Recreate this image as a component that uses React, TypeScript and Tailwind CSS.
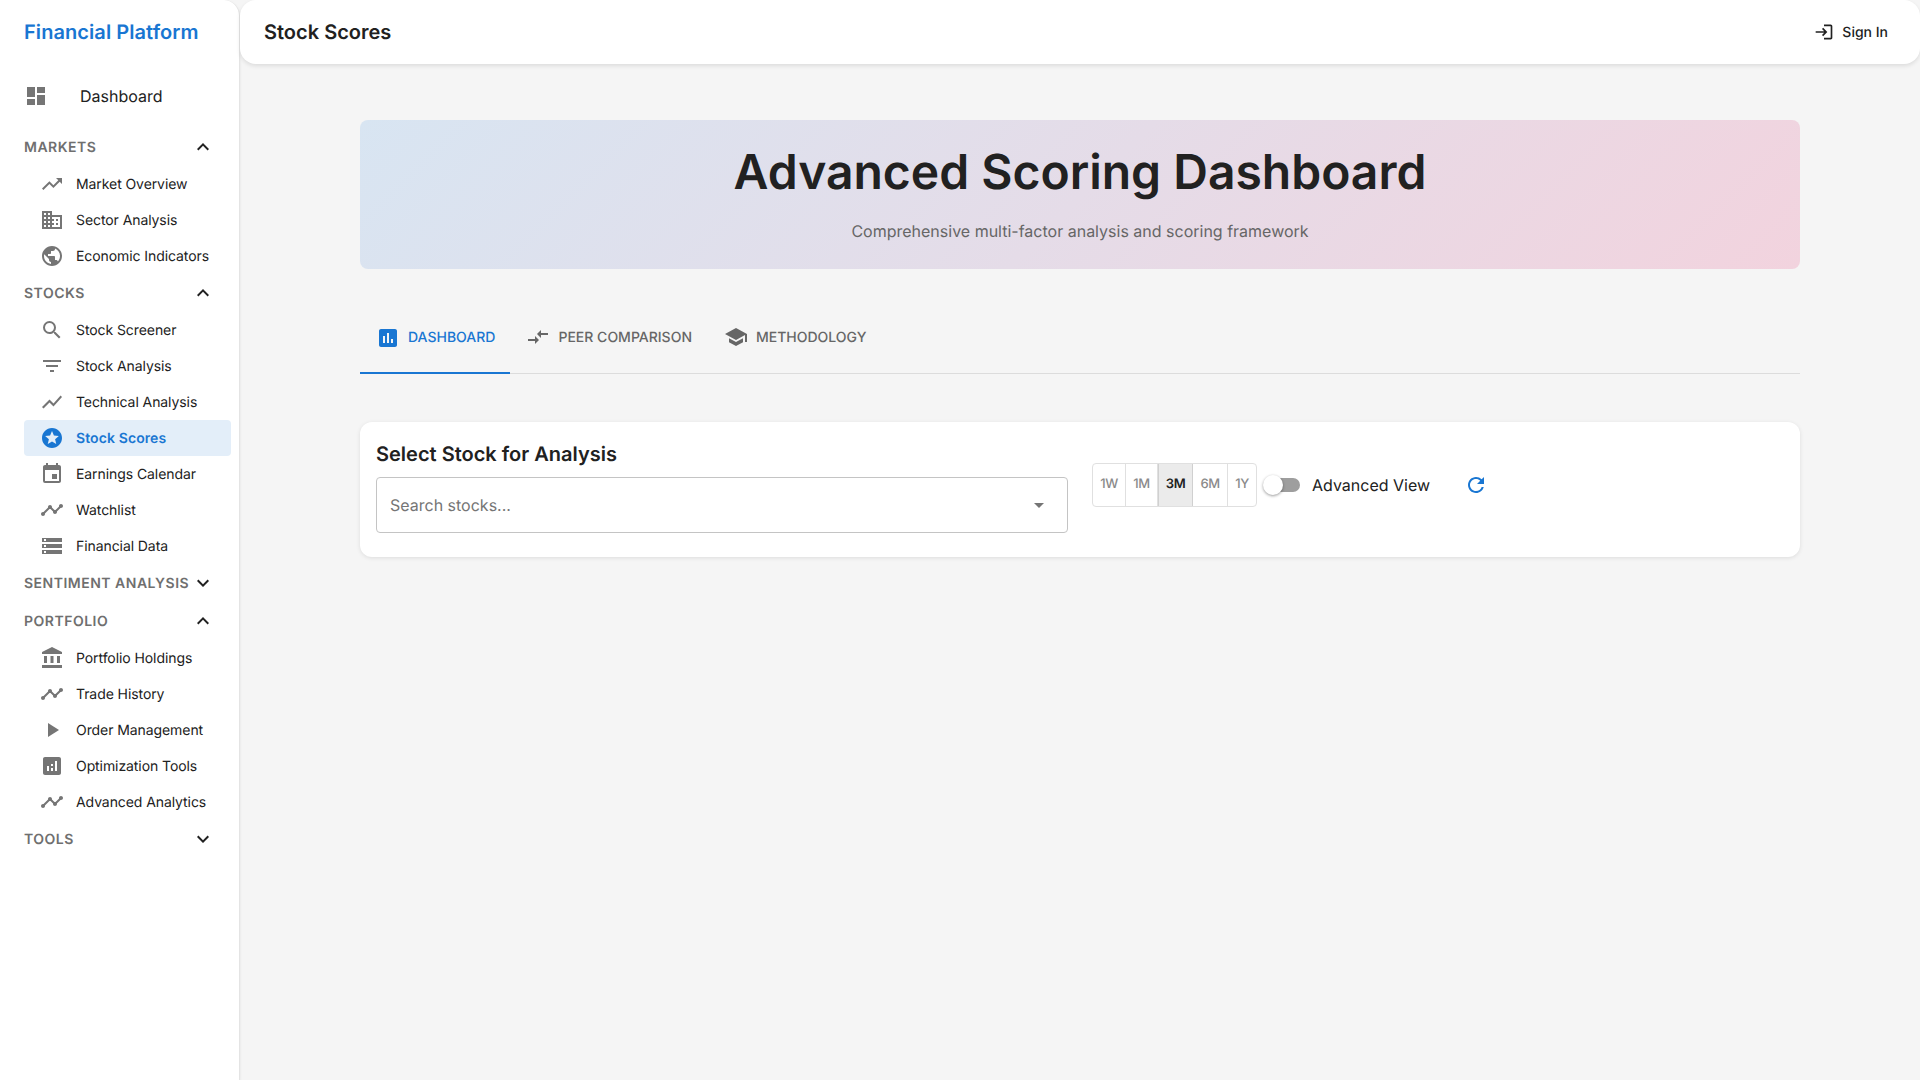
import React from 'react';
import type { IconType } from 'react-icons';
import {
  MdDashboard,
  MdTrendingUp,
  MdBusiness,
  MdPublic,
  MdExpandLess,
  MdExpandMore,
  MdSearch,
  MdFilterList,
  MdShowChart,
  MdStars,
  MdEvent,
  MdTimeline,
  MdStorage,
  MdAccountBalance,
  MdPlayArrow,
  MdAssessment,
  MdAnalytics,
  MdCompareArrows,
  MdSchool,
  MdRefresh,
  MdLogin,
  MdArrowDropDown,
} from 'react-icons/md';

type NavItem = { label: string; icon: IconType; active?: boolean };
type NavSection = { title: string; open: boolean; items: NavItem[] };

const sections: NavSection[] = [
  {
    title: 'Markets',
    open: true,
    items: [
      { label: 'Market Overview', icon: MdTrendingUp },
      { label: 'Sector Analysis', icon: MdBusiness },
      { label: 'Economic Indicators', icon: MdPublic },
    ],
  },
  {
    title: 'Stocks',
    open: true,
    items: [
      { label: 'Stock Screener', icon: MdSearch },
      { label: 'Stock Analysis', icon: MdFilterList },
      { label: 'Technical Analysis', icon: MdShowChart },
      { label: 'Stock Scores', icon: MdStars, active: true },
      { label: 'Earnings Calendar', icon: MdEvent },
      { label: 'Watchlist', icon: MdTimeline },
      { label: 'Financial Data', icon: MdStorage },
    ],
  },
  { title: 'Sentiment Analysis', open: false, items: [] },
  {
    title: 'Portfolio',
    open: true,
    items: [
      { label: 'Portfolio Holdings', icon: MdAccountBalance },
      { label: 'Trade History', icon: MdTimeline },
      { label: 'Order Management', icon: MdPlayArrow },
      { label: 'Optimization Tools', icon: MdAnalytics },
      { label: 'Advanced Analytics', icon: MdTimeline },
    ],
  },
  { title: 'Tools', open: false, items: [] },
];

const ranges = [
  { label: '1W', width: 'w-[33px]' },
  { label: '1M', width: 'w-[32px]' },
  { label: '3M', width: 'w-[35px]' },
  { label: '6M', width: 'w-[35px]' },
  { label: '1Y', width: 'w-[28px]' },
];

const Sidebar: React.FC = () => (
  <aside className="w-[240px] shrink-0 min-h-screen bg-white rounded-tr-2xl border-r border-[#e4e4e4] shadow-[0_1px_3px_rgba(0,0,0,0.08)]">
    <div className="h-[64px] flex items-center pl-6 text-[20px] font-semibold tracking-[0.07px] text-[#1976d2]">Financial Platform</div>
    <div className="h-[48px] mt-2 flex items-center pl-6">
      <MdDashboard className="w-6 h-6 text-[#757575]" />
      <span className="ml-[32px] text-[16px] text-[#212121]">Dashboard</span>
    </div>
    <nav className="mt-2 px-6">
      {sections.map((section) => (
        <div key={section.title}>
          <div className="h-[38px] w-[191px] flex items-center justify-between">
            <span className="text-[14px] font-semibold uppercase tracking-[0.5px] whitespace-nowrap text-[#6f6f6f]">{section.title}</span>
            {section.open ? (
              <MdExpandLess className="w-6 h-6 shrink-0 text-[#212121]" />
            ) : (
              <MdExpandMore className="w-6 h-6 shrink-0 text-[#212121]" />
            )}
          </div>
          {section.items.map((item) => (
            <div
              key={item.label}
              className={
                item.active
                  ? 'h-9 w-[207px] flex items-center pl-4 rounded bg-[#e3eef9] text-[#1976d2] font-semibold tracking-[0.1px]'
                  : 'h-9 w-[207px] flex items-center pl-4 text-[#212121] tracking-[-0.08px]'
              }
            >
              <item.icon className={item.active ? 'w-6 h-6 shrink-0 text-[#1976d2]' : 'w-6 h-6 shrink-0 text-[#757575]'} />
              <span className="ml-3 text-[14px]">{item.label}</span>
            </div>
          ))}
        </div>
      ))}
    </nav>
  </aside>
);

const Topbar: React.FC = () => (
  <header className="h-[64px] bg-white rounded-2xl shadow-[0_2px_4px_rgba(0,0,0,0.1)] flex items-center justify-between pl-6 pr-8">
    <h1 className="text-[20px] font-semibold text-[#212121]">Stock Scores</h1>
    <div className="flex items-center gap-2 text-[14px] font-medium text-[#212121]">
      <MdLogin className="w-5 h-5" />
      <span>Sign In</span>
    </div>
  </header>
);

const Tabs: React.FC = () => (
  <div className="mt-[32px] h-[73px] flex border-b border-[#dcdcdc] text-[14px] font-medium uppercase">
    <div className="h-[73px] pl-4 pr-[15px] pt-[2px] flex items-center gap-2 text-[#1976d2] border-b-2 border-[#1976d2]">
      <MdAssessment className="w-6 h-6" />
      <span>Dashboard</span>
    </div>
    <div className="h-[72px] px-4 flex items-center gap-2 text-[#666666]">
      <MdCompareArrows className="w-6 h-6" />
      <span>Peer Comparison</span>
    </div>
    <div className="h-[72px] px-4 flex items-center gap-2 text-[#666666]">
      <MdSchool className="w-6 h-6" />
      <span>Methodology</span>
    </div>
  </div>
);

const RangeToggle: React.FC = () => (
  <div className="flex h-[44px] rounded border border-[#e0e0e0] text-[13px] tracking-[-0.5px] font-medium">
    {ranges.map((r) => (
      <div
        key={r.label}
        className={
          r.label === '3M'
            ? `${r.width} flex items-center justify-center bg-[#ebebeb] text-[#212121] border-x border-[#d0d0d0] font-semibold`
            : `${r.width} flex items-center justify-center text-[#8a8a8a] not-last:border-r border-[#e0e0e0]`
        }
      >
        {r.label}
      </div>
    ))}
  </div>
);

const StockPicker: React.FC = () => (
  <section className="mt-[48px] h-[135px] bg-white rounded-xl shadow-[0_1px_4px_rgba(0,0,0,0.1)] px-4 flex gap-6">
    <div className="w-[692px] shrink-0 pt-5">
      <h2 className="text-[20px] leading-[24px] font-semibold text-[#212121]">Select Stock for Analysis</h2>
      <div className="mt-[11px] h-[56px] rounded border border-[#c4c4c4] flex items-center justify-between pl-[13px] pr-[16px]">
        <span className="text-[16px] text-[#757575] -mt-[1px]">Search stocks...</span>
        <MdArrowDropDown className="w-6 h-6 text-[#757575]" />
      </div>
    </div>
    <div className="pt-[41px] flex items-start">
      <RangeToggle />
      <div className="h-[44px] ml-[9px] flex items-center">
        <div className="relative w-[34px] h-[14px] rounded-full bg-[#9e9e9e]">
          <div className="absolute -left-[3px] -top-[3px] w-5 h-5 rounded-full bg-white shadow-[0_1px_3px_rgba(0,0,0,0.4)]" />
        </div>
        <span className="ml-3 text-[16px] text-[#212121]">Advanced View</span>
        <MdRefresh className="ml-[34px] w-6 h-6 text-[#1976d2]" />
      </div>
    </div>
  </section>
);

export default function App() {
  return (
    <div className="min-h-screen flex bg-[#f5f5f5] font-['Inter',sans-serif] [text-rendering:geometricPrecision]">
      <Sidebar />
      <div className="flex-1 min-w-0">
        <Topbar />
        <main className="mx-[120px] pt-[56px]">
          <div className="h-[149px] rounded-lg bg-[linear-gradient(135deg,#d8e5f2,#f2d3de)] flex flex-col items-center">
            <h1 className="mt-[23px] text-[48px] leading-[58px] font-semibold text-[#212121]">Advanced Scoring Dashboard</h1>
            <p className="mt-[18px] text-[16px] leading-[24px] text-[#666666]">Comprehensive multi-factor analysis and scoring framework</p>
          </div>
          <Tabs />
          <StockPicker />
        </main>
      </div>
    </div>
  );
}
